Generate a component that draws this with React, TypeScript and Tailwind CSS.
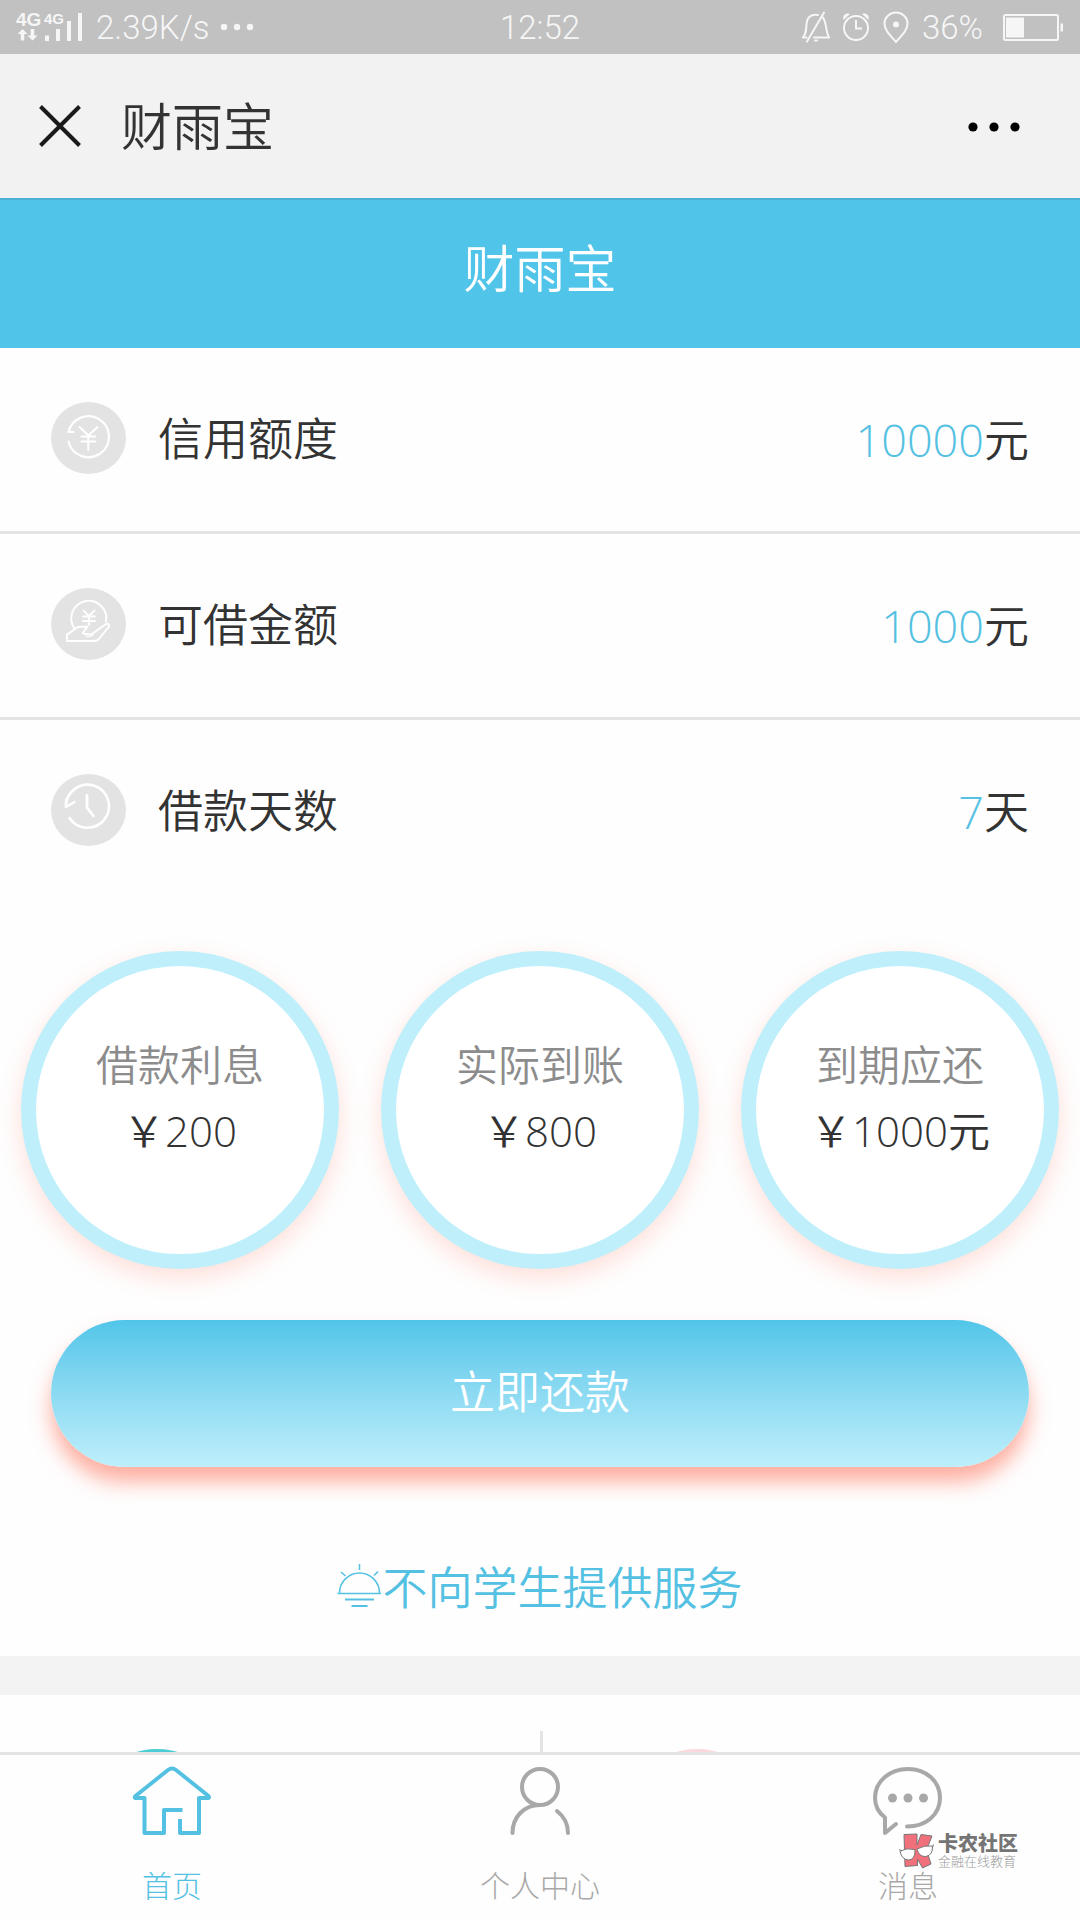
import type { ReactNode } from 'react';

const ROWS = [
  { id: 'credit', icon: <YuanIcon />, label: '信用额度', value: '10000', unit: '元' },
  { id: 'amount', icon: <HandIcon />, label: '可借金额', value: '1000', unit: '元' },
  { id: 'days', icon: <ClockIcon />, label: '借款天数', value: '7', unit: '天' },
];

const CIRCLES = [
  { label: '借款利息', value: '200', unit: '' },
  { label: '实际到账', value: '800', unit: '' },
  { label: '到期应还', value: '1000', unit: '元' },
];

const TABS = [
  { href: '#home', icon: <HomeIcon />, label: '首页', active: true },
  { href: '#me', icon: <PersonIcon />, label: '个人中心', active: false },
  { href: '#message', icon: <ChatIcon />, label: '消息', active: false },
];

function RoundIcon({ children }: { children: ReactNode }) {
  return (
    <svg className="h-[72px] w-[75px] shrink-0" viewBox="0 0 75 72" fill="none" stroke="#fff" strokeLinecap="round" strokeLinejoin="round">
      <ellipse cx="37.5" cy="36" rx="37.5" ry="36" fill="#e3e3e3" stroke="none" />
      {children}
    </svg>
  );
}

function YuanIcon() {
  return (
    <RoundIcon>
      <path d="M17.5 30A20.5 20.5 0 1 1 17.5 39.5M17.5 30h5" strokeWidth="2.2" />
      <path d="M28.5 25l9 8.500 9-8.500M37.3 33.500V48M30.5 34.500h14M30.5 39.500h14" strokeWidth="2" />
    </RoundIcon>
  );
}

function HandIcon() {
  return (
    <RoundIcon>
      <path d="M23.5 40.5A17.500 17.500 0 1 1 55 33.500" strokeWidth="2" />
      <path d="M32.5 22.5l5.5 5.5 5.5-5.5M38 28v9M32 28.5h12M32 33h12" strokeWidth="1.8" />
      <path d="M16 46.500c4-1 6.500-6 11.500-7.500 4-1 6 .5 9-.5-1.500 3-3.500 4-4.500 6.500 2 1.800 5 1.500 9 1l14-10c2-1 4 .5 2.500 3L48 51c-1.500 1.500-3 2-5 2H16z" strokeWidth="2" />
      <path d="M35 48c2 .8 5 .5 7-1.5" strokeWidth="1.2" />
    </RoundIcon>
  );
}

function ClockIcon() {
  return (
    <RoundIcon>
      <path d="M15 32.5A21.5 21.5 0 1 1 18.5 44" strokeWidth="2.6" />
      <path d="M15 25.5v7.5l8.5-5" strokeWidth="2.4" />
      <path d="M36 21.5v12l6.5 8.5" strokeWidth="2.8" />
    </RoundIcon>
  );
}

function HomeIcon() {
  return (
    <svg className="h-[70px] w-20" viewBox="0 0 80 70" fill="none" stroke="currentColor" strokeWidth="4" strokeLinejoin="round" strokeLinecap="butt">
      <path d="M50.5 44H32v23H12.500V32H3.500Q2 31.500 3.500 30L36 4q4-3 8 0l32.500 26q1 1.500 0 2H67v35H48V53" />
    </svg>
  );
}

function PersonIcon() {
  return (
    <svg className="h-[70px] w-20" viewBox="0 0 80 70" fill="none" stroke="currentColor" strokeWidth="4" strokeLinecap="round">
      <circle cx="40" cy="21" r="18" />
      <path d="M40 39C24 39 12.500 51 12.500 67M57 45c7 5.500 11 13 11 22" />
    </svg>
  );
}

function ChatIcon() {
  return (
    <svg className="h-[70px] w-20" viewBox="0 0 80 70" fill="none" stroke="currentColor" strokeWidth="4" strokeLinecap="round" strokeLinejoin="round">
      <path d="M39 60.500C58 60.500 72 48.500 72 32S58.500 3 40 3 7 15.500 7 32c0 8 3.500 14.500 10 19.500V67l11-9" />
      <g fill="currentColor" stroke="none">
        <circle cx="24.5" cy="32" r="4.5" />
        <circle cx="40" cy="32" r="4.5" />
        <circle cx="55.5" cy="32" r="4.5" />
      </g>
    </svg>
  );
}

function SunIcon() {
  return (
    <svg className="h-[45px] w-[45px]" viewBox="0 0 45 45" fill="none" stroke="currentColor" strokeWidth="1.5">
      <path d="M.5 29.500h43.500M2.500 29a20 20 0 0 1 40 0M22.500 0v6M4 8l4.500 4M41 7.500l-4 4" />
      <path d="M8 35.500h29M14.500 42h16" strokeWidth="2" />
    </svg>
  );
}

function SignalIcon() {
  return (
    <svg className="h-[42px] w-[70px]" viewBox="0 -6 70 42" fill="currentColor">
      <text x="0" y="14" fontSize="19" fontWeight="700" fontFamily="Liberation Sans">4G</text>
      <text x="28" y="12" fontSize="15" fontWeight="700" fontFamily="Liberation Sans">4G</text>
      <path d="M6.500 17l5 5H8.300v6.500H4.700V22H1.500zM16.500 28.500l-5-5h3.200V17h3.600v6.500h3.200z" />
      <path d="M29 23.500h4V29h-4zM40 17h4v12h-4zM51 9h4v20h-4zM62 1h4v28h-4z" />
    </svg>
  );
}

function StatusBar() {
  return (
    <div className="grid h-[54px] grid-cols-[1fr_auto_1fr] items-center bg-[#c1c1c1] px-4 font-['Roboto',sans-serif] text-[33px] leading-none text-[#f6f6f6]">
      <div className="flex items-center gap-2.5">
        <SignalIcon />
        <span>2.39K/s</span>
        <svg className="h-2 w-[34px]" viewBox="0 0 34 8" fill="currentColor">
          <circle cx="4" cy="4" r="3.2" />
          <circle cx="17" cy="4" r="3.2" />
          <circle cx="30" cy="4" r="3.2" />
        </svg>
      </div>
      <span>12:52</span>
      <div className="flex items-center justify-end gap-3">
        <svg className="h-8 w-7" viewBox="0 0 28 32" fill="none" stroke="currentColor" strokeWidth="2" strokeLinejoin="round" strokeLinecap="round">
          <path d="M16 4c-7-1.500-11 2.500-11.500 9C4.200 19 4 23 1 26.500h3.500M20 5.500C25 10 23 19 27 26.500H12M22 1.500L5 30.500M13 29.500h2" />
        </svg>
        <svg className="h-8 w-7" viewBox="0 0 28 32" fill="none" stroke="currentColor" strokeWidth="2">
          <circle cx="14" cy="17" r="12" />
          <path d="M14 9v8.500h6" />
          <path d="M1.500 9C0 4.500 4 1.500 8 3zM26.500 9C28 4.500 24 1.500 20 3z" fill="currentColor" stroke="none" />
        </svg>
        <svg className="h-8 w-7" viewBox="0 0 28 32" fill="none" stroke="currentColor" strokeWidth="2">
          <path d="M14 31C8 24 2.500 19 2.500 12.500a11.500 11 0 0 1 23 0C25.500 19 20 24 14 31z" />
          <circle cx="14" cy="13.5" r="3" fill="currentColor" stroke="none" />
        </svg>
        <span>36%</span>
        <svg className="ml-2 h-[27px] w-[61px]" viewBox="0 0 61 27" fill="none" stroke="currentColor" strokeWidth="2">
          <rect x="1" y="1" width="54" height="25" rx="1.5" />
          <path d="M3 3.500h18v20H3zM57.500 9.500H60v8h-2.500z" fill="currentColor" stroke="none" />
        </svg>
      </div>
    </div>
  );
}

function Watermark() {
  return (
    <div className="pointer-events-none absolute right-[62px] bottom-[51px] flex items-center gap-1">
      <svg className="h-9 w-[35px]" viewBox="0 0 35 36" fill="#f0707c" stroke="#777" strokeWidth="1" strokeLinejoin="round">
        <path d="M5 1.500L18 1v11l4-10.500L33 3l-5.500 14L32 31l-8.500 4-5-9v6.500L6 33.500z" />
        <path d="M1 18q7-3.500 15-1.500.5 10-6.500 10.500Q2.500 26.500 1 18zM18 16q7-4 15.500-3 .5 9-6.500 10.500-7 .5-9-7.500z" fill="#fff" />
        <path d="M0 16.500l3 1.500M34.500 11.500l-1 3" />
      </svg>
      <div className="flex flex-col">
        <span className="text-[20px] leading-5 font-black text-[#757575]">卡农社区</span>
        <span className="text-[13px] leading-4 text-[#999]">金融在线教育</span>
      </div>
    </div>
  );
}

export default function App() {
  return (
    <div className="min-h-screen bg-[#fefefe] font-['Noto_Sans_CJK_SC',sans-serif] font-[350] text-[#333]">
      <StatusBar />

      <div className="flex h-36 items-center bg-[#f2f2f2] pr-14 pl-[39px]">
        <button aria-label="关闭">
          <svg className="h-[42px] w-[42px]" viewBox="0 0 42 42" stroke="#1a1a1a" strokeWidth="4">
            <path d="M1.500 1.500l39 39M40.500 1.500l-39 39" />
          </svg>
        </button>
        <span className="ml-10 pb-1 text-[51px] leading-none">财雨宝</span>
        <button aria-label="更多" className="ml-auto">
          <svg className="h-3 w-[60px]" viewBox="0 0 60 12">
            <circle cx="9" cy="7" r="4.6" />
            <circle cx="30" cy="7" r="4.6" />
            <circle cx="51" cy="7" r="4.6" />
          </svg>
        </button>
      </div>

      <header className="flex h-[150px] items-center justify-center border-t-2 border-[#4bb2d3] bg-[#50c5e9] pb-4">
        <h1 className="text-[51px] leading-none text-white">财雨宝</h1>
      </header>

      <main>
        <ul>
          {ROWS.map(row => (
            <li key={row.id} className="flex h-[186px] items-center border-b-3 border-[#e4e4e4] px-[51px] pb-[3px] last:border-transparent">
              {row.icon}
              <span className="ml-8 pb-1 text-[45px] leading-none">{row.label}</span>
              <span className="ml-auto text-[45px] leading-none">
                <span className="font-['Open_Sans'] text-[#54c1e2]">{row.value}</span>{row.unit}
              </span>
            </li>
          ))}
        </ul>

        <div className="mt-[45px] grid grid-cols-3 justify-items-center">
          {CIRCLES.map(circle => (
            <div key={circle.label} className="flex h-[318px] w-[318px] flex-col items-center rounded-full border-[15px] border-[#beeffb] bg-white pt-16 text-[42px] leading-[66px] shadow-[0_9px_24px_rgba(255,99,71,0.2)]">
              <span className="text-[#8c8c8c]">{circle.label}</span>
              <span>￥<span className="font-['Open_Sans']">{circle.value}</span>{circle.unit}</span>
            </div>
          ))}
        </div>

        <div className="px-[51px] pt-[51px]">
          <button className="h-[147px] w-full rounded-full bg-linear-to-b from-[#50c5e9] to-[#beeffb] pb-2 text-[45px] leading-none text-white shadow-[0_15px_20px_rgba(255,99,71,0.5)]">
            立即还款
          </button>
        </div>

        <p className="mt-[93px] flex items-center justify-center text-[45px] leading-[52px] text-[#54c1e2]">
          <SunIcon />不向学生提供服务
        </p>

        <div className="mt-11 h-[39px] bg-[#f3f3f3]" />

        <div className="grid h-[225px] grid-cols-2 pt-9">
          <div className="pt-[18px] pl-[82px]">
            <div className="h-[150px] w-[150px] rounded-full bg-[#4ccdd6]" />
          </div>
          <div className="border-l-3 border-[#e4e4e4] pt-[18px] pl-[79px]">
            <div className="h-[150px] w-[150px] rounded-full bg-[#f9d9dc]" />
          </div>
        </div>
      </main>

      <nav className="fixed inset-x-0 bottom-0 flex h-[168px] justify-between border-t-3 border-[#e4e4e4] bg-[#fefefe] px-28 pt-[11px] text-[30px] leading-10 font-light">
        {TABS.map(tab => (
          <a key={tab.href} href={tab.href} className={`flex w-[120px] flex-col items-center gap-7 ${tab.active ? 'text-[#54c1e2]' : 'text-[#a8a8a8]'}`}>
            {tab.icon}
            <span>{tab.label}</span>
          </a>
        ))}
        <Watermark />
      </nav>
    </div>
  );
}
